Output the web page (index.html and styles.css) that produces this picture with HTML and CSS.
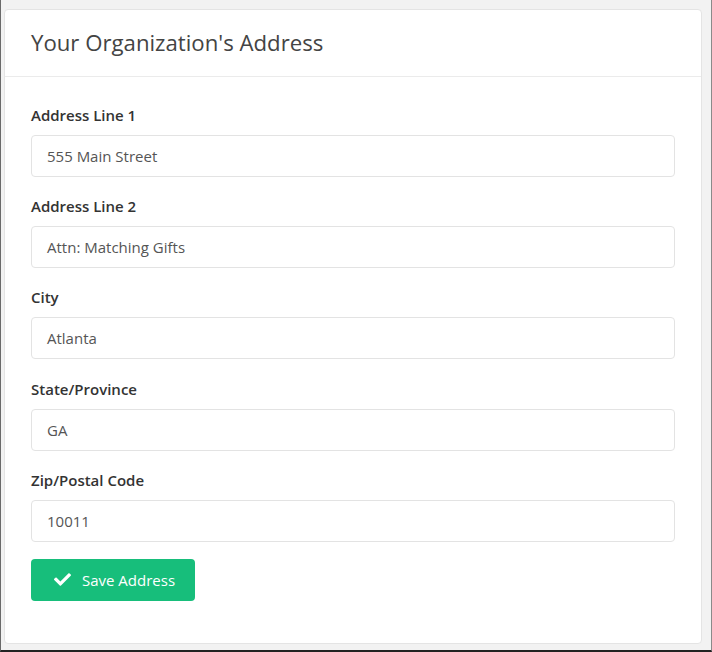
FILE: index.html
```html
<!DOCTYPE html>
<html>
<head>
<meta charset="utf-8">
<link rel="stylesheet" href="styles.css">
</head>
<body>
<div class="frame">
  <div class="card">
    <div class="card-header">
      <h1 class="title">Your Organization's Address</h1>
    </div>
    <div class="card-body">
      <div class="group">
        <label class="label">Address Line 1</label>
        <div class="input">555 Main Street</div>
      </div>
      <div class="group">
        <label class="label">Address Line 2</label>
        <div class="input">Attn: Matching Gifts</div>
      </div>
      <div class="group">
        <label class="label">City</label>
        <div class="input">Atlanta</div>
      </div>
      <div class="group">
        <label class="label">State/Province</label>
        <div class="input">GA</div>
      </div>
      <div class="group last">
        <label class="label">Zip/Postal Code</label>
        <div class="input">10011</div>
      </div>
      <button class="btn">
        <svg class="check" viewBox="0 0 512 512" width="17" height="17"><path fill="#fff" d="M173.898 439.404l-166.4-166.4c-9.997-9.997-9.997-26.206 0-36.204l36.203-36.204c9.997-9.998 26.207-9.998 36.204 0L192 312.69 432.095 72.596c9.997-9.997 26.207-9.997 36.204 0l36.203 36.204c9.997 9.997 9.997 26.206 0 36.204l-294.4 294.401c-9.998 9.997-26.207 9.997-36.204-.001z"/></svg>
        <span>Save Address</span>
      </button>
    </div>
  </div>
</div>
</body>
</html>
```
FILE: styles.css
```css
* { box-sizing: border-box; }
html, body { margin: 0; padding: 0; }
body {
  width: 712px;
  height: 652px;
  font-family: "Open Sans", "Noto Sans", sans-serif;
  background: #f2f2f2;
  overflow: hidden;
}
.frame {
  width: 712px;
  height: 652px;
  border-left: 1px solid #6a6a6a;
  border-right: 1px solid #8a8a8a;
  border-bottom: 2px solid #222;
  padding: 9px 9px 6px 3px;
}
.card {
  width: 698px;
  height: 635px;
  background: #fff;
  border: 1px solid #e4e4e4;
  border-radius: 4px;
}
.card-header {
  height: 67px;
  border-bottom: 1px solid #ebebeb;
  display: flex;
  align-items: center;
  padding: 0 26px;
}
.title {
  margin: 0;
  font-size: 22.2px;
  font-weight: 500;
  color: #444;
  line-height: 28px;
}
.card-body {
  padding: 28px 26px 0 26px;
}
.group {
  margin-bottom: 19.2px;
}
.group.last {
  margin-bottom: 17px;
}
.label {
  display: block;
  font-size: 15px;
  font-weight: 600;
  line-height: 20px;
  color: #333;
  margin-bottom: 10px;
}
.input {
  height: 42px;
  border: 1px solid #e3e3e3;
  border-radius: 4px;
  padding: 0 15px;
  display: flex;
  align-items: center;
  font-size: 15px;
  color: #555;
}
.btn {
  height: 42px;
  width: 164px;
  border: none;
  border-radius: 4px;
  background: #17be7b;
  color: #fff;
  font-family: "Open Sans", "Noto Sans", sans-serif;
  font-size: 15px;
  display: flex;
  align-items: center;
  gap: 11px;
  padding: 0 0 0 23px;
  cursor: pointer;
}
.check { display: block; }
```
